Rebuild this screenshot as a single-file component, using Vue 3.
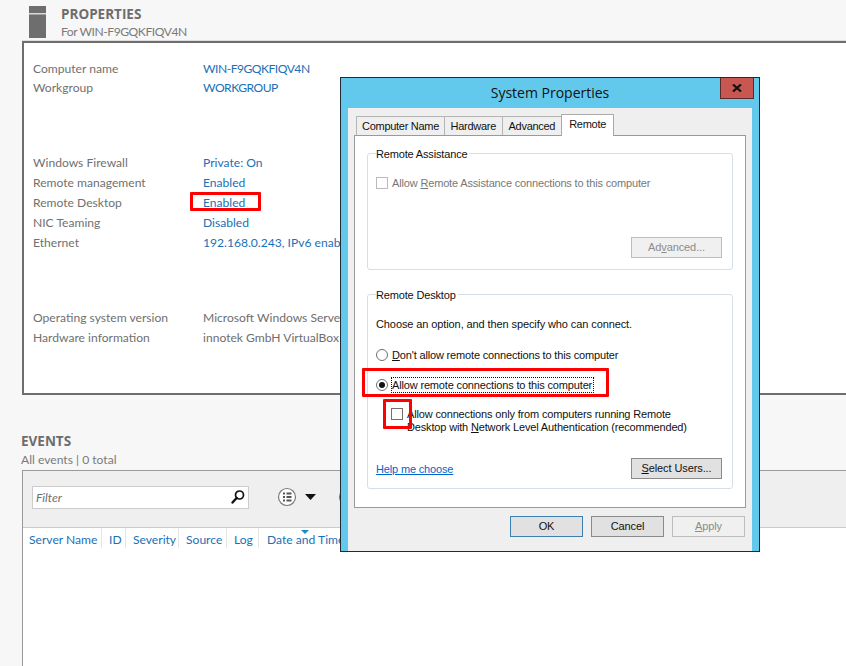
<script setup>
const rowsA = [
  ['Computer name', 'WIN-F9GQKFIQV4N'],
  ['Workgroup', 'WORKGROUP'],
]
const rowsB = [
  ['Windows Firewall', 'Private: On'],
  ['Remote management', 'Enabled'],
  ['Remote Desktop', 'Enabled'],
  ['NIC Teaming', 'Disabled'],
  ['Ethernet', '192.168.0.243, IPv6 enabled'],
]
const rowsC = [
  ['Operating system version', 'Microsoft Windows Server 2012 R2 Standard'],
  ['Hardware information', 'innotek GmbH VirtualBox'],
]
const columns = [
  { name: 'Server Name', w: 79 },
  { name: 'ID', w: 24 },
  { name: 'Severity', w: 53 },
  { name: 'Source', w: 48 },
  { name: 'Log', w: 32 },
  { name: 'Date and Time', w: 120 },
]
const tabs = ['Computer Name', 'Hardware', 'Advanced']
</script>

<template>
  <div class="page">
    <header class="head">
      <svg class="server" width="18" height="33" viewBox="0 0 18 33">
        <rect x="0" y="0" width="17" height="32" fill="#6e6e6e" />
        <rect x="0" y="7" width="17" height="1.5" fill="#d8d8d8" />
      </svg>
      <div>
        <div class="title">PROPERTIES</div>
        <div class="sub caps-tight">For WIN-F9GQKFIQV4N</div>
      </div>
    </header>

    <section class="props">
      <div class="group group-a">
        <div v-for="r in rowsA" :key="r[0]" class="row tight"><span class="key">{{ r[0] }}</span><span class="val caps">{{ r[1] }}</span></div>
      </div>
      <div class="group group-b">
        <div v-for="r in rowsB" :key="r[0]" class="row"><span class="key">{{ r[0] }}</span><span class="val">{{ r[1] }}</span></div>
      </div>
      <div class="group group-c">
        <div v-for="r in rowsC" :key="r[0]" class="row"><span class="key">{{ r[0] }}</span><span class="val plain">{{ r[1] }}</span></div>
      </div>
    </section>

    <section class="events-head">
      <div class="title">EVENTS</div>
      <div class="sub">All events | 0 total</div>
    </section>

    <section class="events">
      <div class="toolbar">
        <div class="filter">
          <span>Filter</span>
          <svg width="16" height="16" viewBox="0 0 16 16">
            <circle cx="9.5" cy="6" r="4" fill="none" stroke="#111" stroke-width="1.7" />
            <path d="M6.6 9 L2.5 13.5" stroke="#111" stroke-width="2.4" stroke-linecap="round" />
          </svg>
        </div>
        <svg class="listicon" width="20" height="20" viewBox="0 0 20 20">
          <circle cx="10" cy="10" r="8.5" fill="#fff" stroke="#7a7a7a" stroke-width="1.2" />
          <path d="M6 6.5h2M6 10h2M6 13.5h2M9.5 6.5h5M9.5 10h5M9.5 13.5h5" stroke="#555" stroke-width="2" />
        </svg>
        <svg class="drop" width="12" height="6" viewBox="0 0 12 6"><path d="M0 0h11L5.500 6z" fill="#111" /></svg>
        <svg class="second" width="20" height="20" viewBox="0 0 20 20">
          <circle cx="10" cy="10" r="8.500" fill="#fff" stroke="#7a7a7a" stroke-width="1.200" />
        </svg>
      </div>
      <div class="cols">
        <div v-for="c in columns" :key="c.name" class="col" :style="{ width: c.w + 'px' }">{{ c.name }}</div>
        <span class="sort"></span>
      </div>
    </section>

    <div class="mark mark-enabled"></div>

    <div class="dialog">
      <div class="dialog-title">System Properties</div>
      <button class="close">
        <svg width="10" height="8" viewBox="0 0 10 8"><path d="M1 0.500 L9 7.500 M9 0.500 L1 7.500" stroke="#111" stroke-width="2.200" /></svg>
      </button>
      <div class="dialog-body">
        <div class="tabs">
          <div v-for="t in tabs" :key="t" class="tab">{{ t }}</div>
          <div class="tab active">Remote</div>
        </div>
        <div class="tabpage">
          <fieldset class="box box-ra">
            <legend>Remote Assistance</legend>
            <div class="check disabled">
              <span class="cb"></span>
              <span>Allow <u>R</u>emote Assistance connections to this computer</span>
            </div>
            <div class="box-foot">
              <button class="btn off">Ad<u>v</u>anced...</button>
            </div>
          </fieldset>
          <fieldset class="box box-rd">
            <legend>Remote Desktop</legend>
            <p class="choose">Choose an option, and then specify who can connect.</p>
            <div class="check radio-row">
              <span class="radio"></span>
              <span><u>D</u>on't allow remote connections to this computer</span>
            </div>
            <div class="check radio-row second-radio">
              <span class="radio on"></span>
              <span class="focus">Allow remote connections to this computer</span>
            </div>
            <div class="check nla">
              <span class="cb"></span>
              <span>Allow connections only from computers running Remote<br />Desktop with <u>N</u>etwork Level Authentication (recommended)</span>
            </div>
            <div class="box-foot foot-rd">
              <a class="help">Help me choose</a>
              <button class="btn"><u>S</u>elect Users...</button>
            </div>
          </fieldset>
        </div>
        <div class="actions">
          <button class="btn act primary">OK</button>
          <button class="btn act">Cancel</button>
          <button class="btn act off"><u>A</u>pply</button>
        </div>
      </div>
    </div>

    <div class="mark mark-radio"></div>
    <div class="mark mark-check"></div>
  </div>
</template>

<style>
html, body { margin: 0; background: #f7f7f7; }
</style>

<style scoped>
.page {
  position: relative;
  width: 846px;
  height: 666px;
  overflow: hidden;
  background: #f7f7f7;
  font-family: Lato, "Open Sans", sans-serif;
  font-size: 12.1px;
  color: #6b6b6b;
}
.head {
  display: flex;
  gap: 14px;
  height: 41px;
  box-sizing: border-box;
  padding: 6px 0 0 29px;
}
.server { flex: none; }
.title { font-family: "Open Sans", sans-serif; font-size: 13.5px; font-weight: 700; line-height: 18px; color: #6d6d6d; }
.sub { line-height: 18px; color: #7a7a7a; }
.caps-tight { letter-spacing: -0.45px; }
.head .title { margin-top: -1px; }
.props {
  margin-left: 22px;
  height: 354px;
  box-sizing: border-box;
  background: #fff;
  border: 2px solid #6e6e6e;
  border-right: 0;
  box-shadow: 0 -1px 0 #ddd;
  padding-left: 9px;
}
.row { display: flex; height: 20px; line-height: 20px; }
.row.tight { height: 19px; line-height: 19px; }
.key { width: 170px; flex: none; white-space: nowrap; color: #707070; }
.val { width: 137px; overflow: hidden; white-space: nowrap; color: #1a70b8; }
.val.caps { letter-spacing: -0.5px; }
.val.plain { color: #6e6e6e; }
.group-a { padding-top: 16px; }
.group-b { padding-top: 56px; }
.group-c { padding-top: 55px; }
.events-head { margin: 37px 0 0 21px; }
.events-head .title { line-height: 18px; }
.events-head .sub { line-height: 18px; margin-top: 1px; }
.events {
  margin: 1px 0 0 22px;
  height: 200px;
  background: #fff;
  border-top: 1.500px solid #999;
  border-left: 1.500px solid #999;
}
.toolbar {
  height: 57px;
  box-sizing: border-box;
  background: #efefef;
  border-bottom: 1.500px solid #ccc;
  display: flex;
  align-items: center;
  padding: 0 0 4px 9px;
}
.filter {
  width: 217px;
  height: 23px;
  box-sizing: border-box;
  background: #fff;
  border: 1.500px solid #ccc;
  display: flex;
  align-items: center;
  justify-content: space-between;
  padding: 0 2px 0 3px;
  font-style: italic;
  color: #6e6e6e;
}
.listicon { margin-left: 28px; }
.drop { margin-left: 8px; }
.second { margin-left: 21px; }
.cols { position: relative; display: flex; height: 20px; }
.col {
  flex: none;
  box-sizing: border-box;
  padding-left: 7px;
  line-height: 24px;
  color: #1a70b8;
  white-space: nowrap;
  border-right: 1px solid #e6e6e6;
}
.col:first-child { padding-left: 6px; }
.col:nth-child(6) { padding-left: 8px; }
.sort {
  position: absolute;
  left: 278px;
  top: 2px;
  border: 4px solid transparent;
  border-top: 4px solid #1a8ad0;
  border-bottom: 0;
}
.mark {
  position: absolute;
  box-sizing: border-box;
  border: 3px solid #f00;
  border-radius: 1px;
}
.mark-enabled { left: 190px; top: 192px; width: 71px; height: 19px; }
.mark-radio { left: 362px; top: 368px; width: 247px; height: 29px; }
.mark-check { left: 383px; top: 399px; width: 29px; height: 30px; }
.dialog {
  position: absolute;
  left: 340px;
  top: 77px;
  width: 420px;
  height: 475px;
  box-sizing: border-box;
  background: #63c9ec;
  border: 1px solid #1f2a36;
  padding: 30px 7px 7px;
  font-family: "Liberation Sans", Arial, sans-serif;
  font-size: 11px;
  letter-spacing: -0.16px;
  color: #111;
}
.dialog-title {
  position: absolute;
  left: 0;
  right: 0;
  top: 5px;
  text-align: center;
  font-family: "Open Sans", sans-serif;
  font-size: 14px;
  letter-spacing: 0;
  line-height: 20px;
  color: #111;
}
.close {
  position: absolute;
  right: 5px;
  top: 0;
  width: 34px;
  height: 21px;
  padding: 0;
  background: #c75750;
  border: 1px solid #5a2a28;
  border-top: 0;
  display: flex;
  align-items: center;
  justify-content: center;
}
.dialog-body {
  height: 436px;
  background: #efefef;
  padding: 7px 6px 0 6px;
}
.tabs { display: flex; padding-left: 2px; height: 20px; align-items: flex-end; }
.tab {
  box-sizing: border-box;
  height: 19px;
  line-height: 18px;
  padding: 0 5px;
  background: #efefef;
  border: 1px solid #b5b5b5;
  border-bottom: 0;
  margin-right: -1px;
  white-space: nowrap;
  letter-spacing: -0.28px;
  color: #111;
}
.tab:nth-child(2) { padding: 0 5.5px; }
.tab:nth-child(3) { padding: 0 6px; }
.tab.active {
  position: relative;
  z-index: 1;
  height: 22px;
  margin-bottom: -1px;
  line-height: 18px;
  background: #fff;
  padding: 0 7px;
  border-color: #aaa;
}
.tabpage {
  height: 373px;
  box-sizing: border-box;
  width: 392px;
  background: #fff;
  border: 1px solid #9a9a9a;
  padding: 9px 12px 0;
}
.box {
  margin: 0;
  padding: 0 8px;
  border: 1px solid #d5dfe5;
  border-radius: 3px;
  box-sizing: border-box;
  min-width: 0;
}
.box legend {
  padding: 1px 2px 0 0;
  margin-left: 0;
  line-height: 16px;
  color: #111;
}
.box-ra { height: 125px; }
.box-rd { height: 203px; margin-top: 16px; }
.check { display: flex; align-items: center; gap: 4px; line-height: 14px; white-space: nowrap; }
.check.disabled { margin-top: 14px; color: #777; }
.cb {
  flex: none;
  width: 12px;
  height: 12px;
  box-sizing: border-box;
  background: #fff;
  border: 1px solid #707070;
}
.disabled .cb { border-color: #bbb; }
.box-foot { display: flex; justify-content: flex-end; padding-right: 2px; }
.box-ra .box-foot { margin-top: 47px; }
.btn {
  width: 91px;
  height: 21px;
  box-sizing: border-box;
  padding: 0;
  background: #e1e1e1;
  border: 1px solid #8a8a8a;
  font-family: inherit;
  font-size: 11px;
  letter-spacing: -0.1px;
  line-height: 17px;
  color: #111;
}
.btn.off { background: #f0f0f0; border-color: #bdbdbd; color: #8c8c8c; }
.choose { margin: 13px 0 0; line-height: 16px; white-space: nowrap; color: #111; letter-spacing: -0.1px; }
.radio {
  flex: none;
  width: 12px;
  height: 12px;
  box-sizing: border-box;
  border: 1px solid #707070;
  border-radius: 50%;
  background: #fff;
  display: flex;
  align-items: center;
  justify-content: center;
}
.radio.on::after {
  content: "";
  width: 6px;
  height: 6px;
  border-radius: 50%;
  background: #111;
}
.radio-row { margin-top: 16px; }
.second-radio { margin-top: 16px; }
.focus { outline: 1px dotted #111; outline-offset: 0; padding: 0 1px 0 0; }
.nla { margin: 16px 0 0 15px; align-items: flex-start; line-height: 13px; }
.foot-rd { margin-top: 24px; justify-content: space-between; align-items: center; }
.help { color: #0066cc; text-decoration: underline; }
.actions { display: flex; justify-content: flex-end; gap: 8px; padding: 8px 1px 0 0; }
.act { width: 73px; }
.primary { border-color: #3c7fb1; }
</style>
